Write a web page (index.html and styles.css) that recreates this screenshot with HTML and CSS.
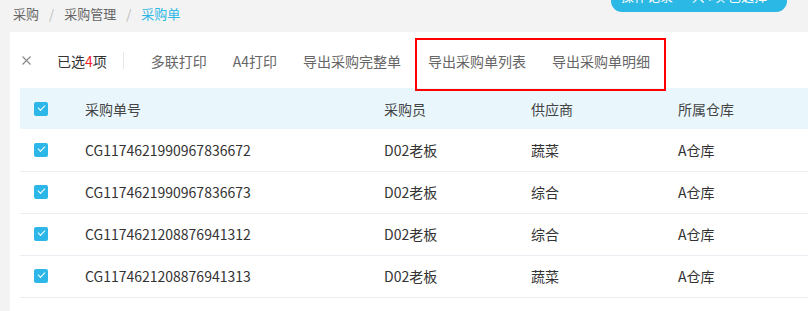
FILE: index.html
```html
<!DOCTYPE html>
<html lang="zh-CN">
<head>
<meta charset="utf-8">
<title>采购单</title>
<link rel="stylesheet" href="styles.css">
</head>
<body>
<div class="top-pill"><span>操作记录 · 共4项 已选择</span></div>
<nav class="breadcrumb">
  <span class="crumb">采购</span><span class="sep">/</span><span class="crumb">采购管理</span><span class="sep">/</span><span class="crumb current">采购单</span>
</nav>
<main class="card">
  <div class="toolbar">
    <span class="close-btn">
      <svg width="9" height="9" viewBox="0 0 9 9"><path d="M0.5 0.5L8.5 8.5M8.5 0.5L0.5 8.5" stroke="#888" stroke-width="1.1" fill="none"/></svg>
    </span>
    <span class="selected">已选<em>4</em>项</span>
    <span class="divider"></span>
    <span class="tool">多联打印</span>
    <span class="tool">A4打印</span>
    <span class="tool">导出采购完整单</span>
    <span class="highlight">
      <span class="tool">导出采购单列表</span>
      <span class="tool">导出采购单明细</span>
    </span>
  </div>
  <table class="grid">
    <colgroup>
      <col class="c-check"><col class="c-no"><col class="c-buyer"><col class="c-supplier"><col>
    </colgroup>
    <thead>
      <tr>
        <th><span class="checkbox"></span></th>
        <th>采购单号</th>
        <th>采购员</th>
        <th>供应商</th>
        <th>所属仓库</th>
      </tr>
    </thead>
    <tbody>
      <tr><td><span class="checkbox"></span></td><td>CG1174621990967836672</td><td>D02老板</td><td>蔬菜</td><td>A仓库</td></tr>
      <tr><td><span class="checkbox"></span></td><td>CG1174621990967836673</td><td>D02老板</td><td>综合</td><td>A仓库</td></tr>
      <tr><td><span class="checkbox"></span></td><td>CG1174621208876941312</td><td>D02老板</td><td>综合</td><td>A仓库</td></tr>
      <tr><td><span class="checkbox"></span></td><td>CG1174621208876941313</td><td>D02老板</td><td>蔬菜</td><td>A仓库</td></tr>
    </tbody>
  </table>
</main>
</body>
</html>
```
FILE: styles.css
```css
* { box-sizing: border-box; }
html, body { margin: 0; padding: 0; }
body {
  background: #f3f3f3;
  font-family: "Noto Sans CJK SC", "Noto Sans", sans-serif;
  color: #333;
  width: 808px;
  height: 311px;
  overflow: hidden;
  position: relative;
}
.top-pill {
  position: absolute;
  left: 611px;
  top: -20px;
  width: 176px;
  height: 32px;
  background: #2cb8e4;
  border-radius: 0 0 11px 11px;
  color: #fff;
  font-size: 13px;
  line-height: 20px;
  padding-left: 10px;
  overflow: hidden;
}
.top-pill span { display: block; margin-top: 6px; }
.breadcrumb {
  height: 32px;
  padding: 5px 0 0 13px;
  font-size: 13px;
  line-height: 18px;
  color: #666;
}
.sep { color: #bbb; margin: 0 10px; }
.current { color: #2db7e5; }
.card {
  margin-left: 10px;
  background: #fff;
  height: 279px;
  padding-left: 10px;
}
.toolbar {
  position: relative;
  height: 56px;
  display: flex;
  align-items: center;
  font-size: 14px;
  color: #666;
  padding-top: 1px;
}
.close-btn { display: flex; margin-left: 2px; width: 9px; height: 9px; }
.selected { margin-left: 26px; color: #333; }
.selected em { font-style: normal; color: #f5222d; }
.divider {
  width: 1px;
  height: 17px;
  background: #e6e6e6;
  margin: 0 14px 0 16px;
}
.tool { padding: 0 13px; white-space: nowrap; }
.highlight { display: flex; position: relative; margin-left: 1px; }
.highlight::after {
  content: "";
  position: absolute;
  left: 0px;
  right: -3px;
  top: -13px;
  height: 49px;
  border: 2px solid #f00;
}
.grid {
  width: 788px;
  border-collapse: collapse;
  table-layout: fixed;
  font-size: 14px;
}
.c-check { width: 65px; }
.c-no { width: 299px; }
.c-buyer { width: 147px; }
.c-supplier { width: 147px; }
.grid th {
  background: #e9f7fd;
  height: 41px;
  font-weight: normal;
  text-align: left;
  color: #444;
  padding: 0;
}
.grid td {
  height: 42px;
  padding: 0;
  border-bottom: 1px solid #ebedf3;
  color: #333;
}
.grid th:first-child, .grid td:first-child { padding-left: 14px; }
.checkbox {
  display: block;
  width: 14px;
  height: 14px;
  border-radius: 2px;
  background: #2db7e8;
  position: relative;
}
.checkbox::after {
  content: "";
  position: absolute;
  left: 4px;
  top: 3px;
  width: 6px;
  height: 3px;
  border-left: 1.5px solid #fff;
  border-bottom: 1.5px solid #fff;
  transform: rotate(-45deg);
}
```
